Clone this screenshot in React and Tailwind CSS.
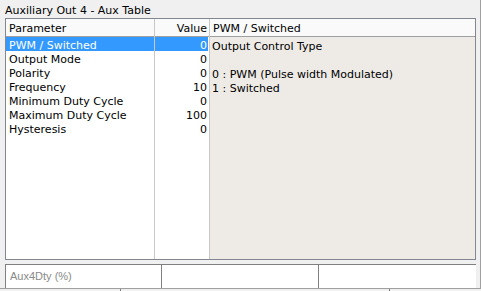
import React from "react";

const rows = [
  { name: "PWM / Switched", value: "0" },
  { name: "Output Mode", value: "0" },
  { name: "Polarity", value: "0" },
  { name: "Frequency", value: "10" },
  { name: "Minimum Duty Cycle", value: "0" },
  { name: "Maximum Duty Cycle", value: "100" },
  { name: "Hysteresis", value: "0" },
];

function App() {
  const selected = 0;

  return (
    <div
      className="w-[481px] h-[291px] bg-[#f0f0f0] flex flex-col overflow-hidden text-[11px] text-black"
      style={{ fontFamily: '"DejaVu Sans", sans-serif' }}
    >
      <div className="flex flex-1 border-r border-[#a0a0a0]">
        <div className="flex flex-col flex-1">
          {/* Title */}
          <div className="h-[18px] pl-[5px] pt-[3px] leading-[15px]">Auxiliary Out 4 - Aux Table</div>

          {/* Table */}
          <div className="ml-[5px] mr-[4px] h-[242px] border border-[#828790] bg-white flex">
            {/* Parameter column */}
            <div className="w-[149px] flex flex-col border-r border-[#c8c8c8]">
              <div className="h-[18px] border-b border-[#a0a0a0] bg-[#fafafa] pl-[3px] pt-[2px] leading-[15px]">
                Parameter
              </div>
              {rows.map((r, i) => (
                <div
                  key={r.name}
                  className={
                    i === selected
                      ? "h-[14px] leading-[11px] pt-[3px] pl-[3px] bg-[#3399ff] text-white"
                      : "h-[14px] leading-[11px] pt-[3px] pl-[3px]"
                  }
                >
                  {r.name}
                </div>
              ))}
            </div>

            {/* Value column */}
            <div className="w-[55px] flex flex-col border-r border-[#c8c8c8]">
              <div className="h-[18px] border-b border-[#a0a0a0] bg-[#fafafa] pr-[2px] pt-[2px] text-right leading-[15px]">
                Value
              </div>
              {rows.map((r, i) => (
                <div
                  key={r.name}
                  className={
                    i === selected
                      ? "h-[14px] leading-[11px] pt-[3px] pr-[1px] text-right bg-[#3399ff] text-white mr-[1px]"
                      : "h-[14px] leading-[11px] pt-[3px] pr-[2px] text-right"
                  }
                >
                  {r.value}
                </div>
              ))}
            </div>

            {/* Description */}
            <div className="flex-1 flex flex-col">
              <div className="h-[18px] border-b border-[#a0a0a0] bg-[#fafafa] pl-[3px] pt-[2px] leading-[15px]">
                PWM / Switched
              </div>
              <div className="flex-1 bg-[#eeebe7] pl-[2px] pt-[3px] leading-[14px]">
                <div>Output Control Type</div>
                <div>&nbsp;</div>
                <div>0 : PWM (Pulse width Modulated)</div>
                <div>1 : Switched</div>
              </div>
            </div>
          </div>

          {/* Status bar */}
          <div className="mt-[4px] ml-[5px] mr-[4px] h-[24px] border-t border-[#808080] bg-white flex">
            <div
              className="w-[157px] border-l border-r border-[#808080] pl-[4px] pt-[3px] text-[#8a8a8a] text-[11px]"
              style={{ fontFamily: '"Liberation Sans", sans-serif' }}
            >
              Aux4Dty (%)
            </div>
            <div className="w-[157px] border-r border-[#808080]"></div>
            <div className="flex-1"></div>
          </div>
        </div>
      </div>

      <div className="h-[4px] border-t border-[#a0a0a0] flex">
        <div className="w-[120px]"></div>
        <div className="w-[270px] border-l border-r border-[#808080]"></div>
      </div>
    </div>
  );
}

export default App;
